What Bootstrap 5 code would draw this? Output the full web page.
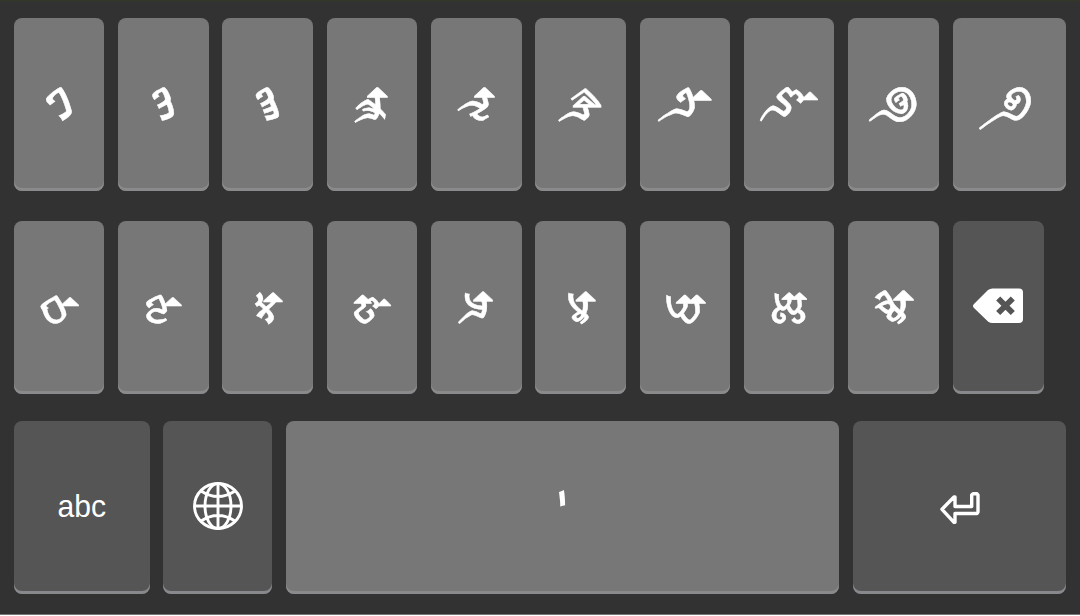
<!DOCTYPE html>
<html lang="sa">
<head>
<meta charset="utf-8">
<meta name="viewport" content="width=device-width, initial-scale=1">
<title>Bhaiksuki keyboard</title>
<link href="https://cdn.jsdelivr.net/npm/bootstrap@5.3.0/dist/css/bootstrap.min.css" rel="stylesheet">
<style>
body{background:#fff;overflow:hidden}
.keyboard{height:615px;width:1080px;background:#323232;border-top:2px solid #33362b;border-bottom:1px solid #777;padding:16px 0 0 13.9px}
.keys{gap:13.8px;height:172.6px}
.keys-first{margin-bottom:30.4px}
.keys-second{margin-bottom:27.4px}
.key{background:#777;border:0;border-radius:8px;box-shadow:inset 0 -3px 0 #8a8a8c;width:90.5px;color:#fff;flex:none;line-height:1;font-family:"Noto Sans Bhaiksuki","Noto Sans",sans-serif;font-size:58px}
/* numerals of every size stand on one common baseline */
.key-num{display:flex;justify-content:center;align-items:baseline;-webkit-text-stroke:.5px #fff}
.key-num::before{content:"";display:inline-block;width:0;height:102.4px}
.size-s{font-size:50px}
.size-m{font-size:54px}
.size-l{font-size:56px}
.key-fn{background:#555;box-shadow:inset 0 -3px 0 #88898d}
.key-back{width:91.2px;padding-bottom:2px!important}
.key-ten{width:113.2px}
.key-abc{width:135.8px;font:32px "Liberation Sans",Arial,sans-serif;padding-bottom:2px!important}
.key-abc span{transform:scaleX(.94)}
.key-globe{width:108.7px;padding-bottom:3px!important}
.key-space{width:553px;padding-top:3px!important}
.key-enter{width:213.2px;padding:2px 0 0 1px!important}
</style>
</head>
<body>
<main class="keyboard">
<div class="d-flex keys keys-first">
<button class="key key-num p-0"><span>&#x11C5A;</span></button>
<button class="key key-num p-0"><span>&#x11C5B;</span></button>
<button class="key key-num p-0"><span>&#x11C5C;</span></button>
<button class="key key-num p-0"><span>&#x11C5D;</span></button>
<button class="key key-num p-0"><span>&#x11C5E;</span></button>
<button class="key key-num p-0"><span>&#x11C5F;</span></button>
<button class="key key-num p-0"><span>&#x11C60;</span></button>
<button class="key key-num p-0"><span>&#x11C61;</span></button>
<button class="key key-num p-0"><span>&#x11C62;</span></button>
<button class="key key-num key-ten p-0"><span>&#x11C63;</span></button>
</div>
<div class="d-flex keys keys-second">
<button class="key key-num size-s p-0"><span>&#x11C64;</span></button>
<button class="key key-num size-s p-0"><span>&#x11C65;</span></button>
<button class="key key-num size-m p-0"><span>&#x11C66;</span></button>
<button class="key key-num size-s p-0"><span>&#x11C67;</span></button>
<button class="key key-num size-l p-0"><span>&#x11C68;</span></button>
<button class="key key-num size-l p-0"><span>&#x11C69;</span></button>
<button class="key key-num size-s p-0"><span>&#x11C6A;</span></button>
<button class="key key-num size-m p-0"><span>&#x11C6B;</span></button>
<button class="key key-num p-0"><span>&#x11C6C;</span></button>
<button class="key key-fn key-back p-0 d-flex align-items-center justify-content-center" aria-label="Backspace">
<svg width="50" height="36" viewBox="0 0 50 36"><path fill="#fff" d="M1 16 15 2Q17 .5 19.500 .5H46Q50 .5 50 4.500V31Q50 35 46 35H19.500Q17 35 15 33.500L1 20Q-1 18 1 16Z"/><path d="M25.200 10.500 39.800 25M39.800 10.500 25.200 25" stroke="#555" stroke-width="5.800"/></svg></button>
</div>
<div class="d-flex keys">
<button class="key key-fn key-abc p-0 d-flex align-items-center justify-content-center"><span>abc</span></button>
<button class="key key-fn key-globe p-0 d-flex align-items-center justify-content-center" aria-label="Language">
<svg width="50" height="48" viewBox="0 0 50 48" fill="none" stroke="#fff" stroke-width="2.900"><ellipse cx="25" cy="24" rx="23.500" ry="22.500"/><ellipse cx="25" cy="24" rx="13" ry="22.500"/><path d="M25 1.500V46.500M1.500 24H48.500M8 9Q25 20 42 9M8 39Q25 28 42 39"/></svg></button>
<button class="key key-space p-0 d-flex align-items-center justify-content-center"><span>&#x11C43;</span></button>
<button class="key key-fn key-enter p-0 d-flex align-items-center justify-content-center" aria-label="Enter">
<svg width="40" height="32" viewBox="0 0 40 32" fill="none" stroke="#fff" stroke-width="3.400" stroke-linejoin="round"><path d="M2 17.300 14 5H15V14.500H31.700V3L33 1.800H37L38 3V20L37 21.500H15V30.300H14Z"/></svg></button>
</div>
</main>
<script src="https://cdn.jsdelivr.net/npm/bootstrap@5.3.0/dist/js/bootstrap.bundle.min.js"></script>
</body>
</html>
